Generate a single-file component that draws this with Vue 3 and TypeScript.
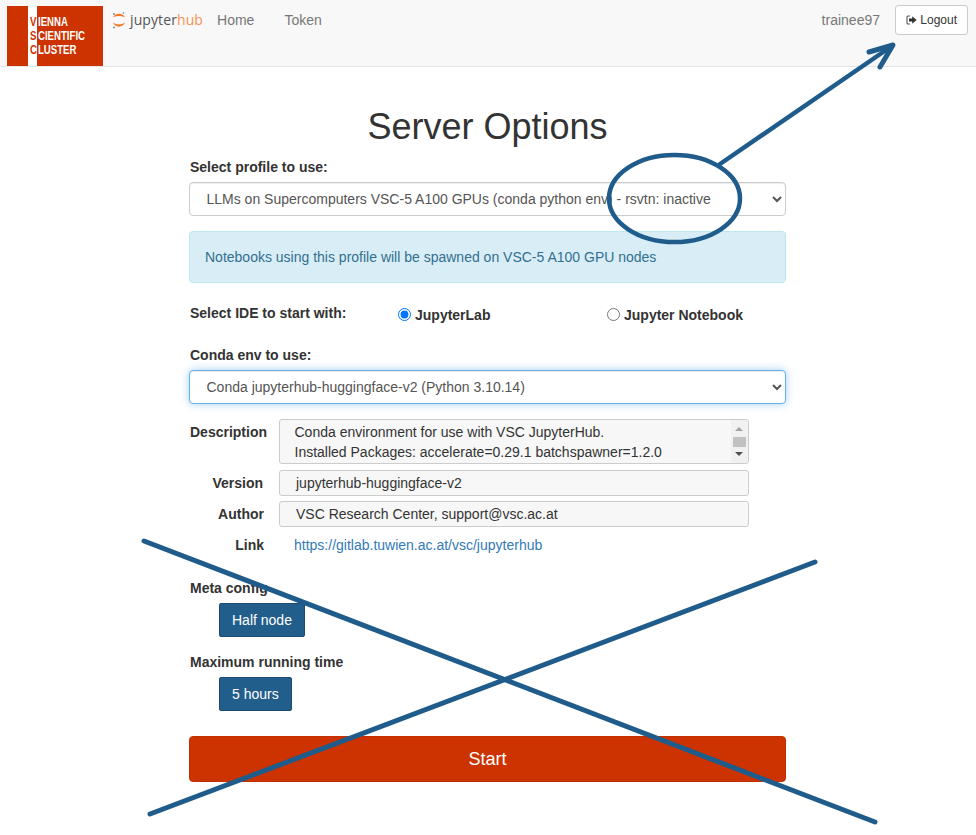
<script setup lang="ts">
import { ref } from 'vue'
const profile = ref('LLMs on Supercomputers VSC-5 A100 GPUs (conda python env) - rsvtn: inactive')
const env = ref('Conda jupyterhub-huggingface-v2 (Python 3.10.14)')
const ide = ref('lab')
</script>

<template>
  <div class="page">
    <nav class="navbar">
      <div class="logo">
        <div class="stripe"></div>
        <div class="logo-text">
          <span><b>V</b>IENNA</span>
          <span><b>S</b>CIENTIFIC</span>
          <span><b>C</b>LUSTER</span>
        </div>
      </div>
      <div class="jh">
        <svg class="jh-mark" width="14" height="18" viewBox="0 0 14 18">
          <path d="M1 6.5 C3 1.5 11 1.5 13 6.5 C10 4.5 4 4.5 1 6.5Z" fill="#f37726"/>
          <path d="M1 11.5 C3 17 11 17 13 11.5 C10 14 4 14 1 11.5Z" fill="#f37726"/>
          <circle cx="2" cy="3" r="0.9" fill="#777"/>
          <circle cx="11.5" cy="2" r="0.8" fill="#777"/>
          <circle cx="2" cy="16.4" r="0.9" fill="#777"/>
        </svg>
        <span class="jh-a">jupyter</span><span class="jh-b">hub</span>
      </div>
      <a class="nav-link first">Home</a>
      <a class="nav-link">Token</a>
      <div class="nav-right">
        <span class="user">trainee97</span>
        <button class="logout">
          <svg width="11" height="10" viewBox="0 0 11 10">
            <path d="M4 1H2Q1 1 1 2V8Q1 9 2 9H4" fill="none" stroke="#555" stroke-width="1.1"/>
            <path d="M3 3.6H6.2V1.2L10.6 5L6.2 8.8V6.4H3Z" fill="#333"/>
          </svg>
          Logout
        </button>
      </div>
    </nav>

    <main class="container">
      <h1>Server Options</h1>
      <label class="lbl first-lbl">Select profile to use:</label>
      <select class="control" v-model="profile">
        <option>LLMs on Supercomputers VSC-5 A100 GPUs (conda python env) - rsvtn: inactive</option>
      </select>
      <div class="alert">Notebooks using this profile will be spawned on VSC-5 A100 GPU nodes</div>

      <div class="ide">
        <span class="ide-label">Select IDE to start with:</span>
        <label class="radio lab"><input type="radio" value="lab" v-model="ide" />JupyterLab</label>
        <label class="radio nb"><input type="radio" value="nb" v-model="ide" />Jupyter Notebook</label>
      </div>

      <label class="lbl env-lbl">Conda env to use:</label>
      <select class="control focus" v-model="env">
        <option>Conda jupyterhub-huggingface-v2 (Python 3.10.14)</option>
      </select>

      <div class="meta">
        <div class="meta-row desc-row">
          <span class="key">Description</span>
          <div class="box desc">
            <div class="desc-text">Conda environment for use with VSC JupyterHub.<br />Installed Packages: accelerate=0.29.1 batchspawner=1.2.0</div>
            <div class="scroll">
              <i class="up"></i>
              <i class="thumb"></i>
              <i class="down"></i>
            </div>
          </div>
        </div>
        <div class="meta-row">
          <span class="key">Version</span>
          <div class="box">jupyterhub-huggingface-v2</div>
        </div>
        <div class="meta-row author-row">
          <span class="key">Author</span>
          <div class="box">VSC Research Center, support@vsc.ac.at</div>
        </div>
        <div class="meta-row link-row">
          <span class="key">Link</span>
          <a class="link">https://gitlab.tuwien.ac.at/vsc/jupyterhub</a>
        </div>
      </div>

      <label class="lbl cfg-lbl">Meta config</label>
      <button class="opt">Half node</button>
      <label class="lbl time-lbl">Maximum running time</label>
      <button class="opt">5 hours</button>
      <button class="start">Start</button>
    </main>

    <svg class="annot" width="976" height="835" viewBox="0 0 976 835">
      <g fill="none" stroke="#1f5c8b" stroke-linecap="round" stroke-linejoin="round">
        <ellipse cx="674.5" cy="198.5" rx="65.5" ry="43.5" stroke-width="4.5"/>
        <path d="M720 164 L889 48" stroke-width="4.5"/>
        <path d="M869 52 L893 45 L880 67" stroke-width="5"/>
        <path d="M144 541 L875 822" stroke-width="5"/>
        <path d="M815 562 L150 814" stroke-width="5"/>
      </g>
    </svg>
  </div>
</template>

<style scoped>
.page {
  position: relative;
  width: 976px;
  height: 835px;
  overflow: hidden;
  background: #fff;
  color: #333;
  font-family: "Liberation Sans", Arial, sans-serif;
  font-size: 14px;
  line-height: 20px;
}
.navbar {
  display: flex;
  height: 67px;
  box-sizing: border-box;
  background: #f8f8f8;
  border-bottom: 1px solid #e7e7e7;
  padding-left: 7px;
}
.logo {
  position: relative;
  width: 96px;
  height: 60px;
  margin-top: 6px;
  background: #cc3300;
  flex: none;
}
.stripe {
  position: absolute;
  left: 21px;
  top: 0;
  width: 9px;
  height: 60px;
  background: #fff;
}
.logo-text {
  position: absolute;
  left: 23px;
  top: 9px;
  display: flex;
  flex-direction: column;
  color: #fff;
  font-family: "Liberation Sans", Arial, sans-serif;
  font-weight: 700;
  font-size: 13px;
  line-height: 14px;
  transform: scaleX(0.74);
  transform-origin: left top;
  white-space: nowrap;
}
.logo-text b {
  display: inline-block;
  width: 10.8px;
  color: #cc3300;
}
.jh {
  display: flex;
  align-items: center;
  height: 18px;
  margin: 11px 0 0 9px;
  font-family: "Open Sans", sans-serif;
  font-size: 14px;
  line-height: 18px;
  letter-spacing: 0.1px;
}
.jh-mark {
  margin-right: 4px;
}
.jh-a {
  color: #555;
}
.jh-b {
  color: #f5934f;
}
.nav-link {
  margin: 10px 0 0 30px;
  color: #777;
  line-height: 20px;
}
.nav-link.first {
  margin-left: 14px;
}
.nav-right {
  margin-left: auto;
  display: flex;
  align-items: flex-start;
  padding-right: 8px;
}
.user {
  margin: 10px 15px 0 0;
  color: #777;
}
.logout {
  margin-top: 5px;
  width: 73px;
  height: 30px;
  padding: 0;
  background: #fff;
  border: 1px solid #ccc;
  border-radius: 3px;
  color: #333;
  font: 12px/18px "Liberation Sans", Arial, sans-serif;
}
.logout svg {
  vertical-align: -1px;
}
.container {
  width: 597px;
  margin-left: 189px;
  display: flex;
  flex-direction: column;
  align-items: flex-start;
}
h1 {
  width: 100%;
  margin: 40px 0 0;
  text-align: center;
  font-size: 36px;
  font-weight: 500;
  line-height: 40px;
}
.lbl {
  display: block;
  margin-left: 1px;
  font-weight: 700;
  line-height: 20px;
}
.first-lbl {
  margin: 10px 0 5px 1px;
}
.control {
  display: block;
  width: 100%;
  height: 34px;
  box-sizing: border-box;
  padding: 6px 12.5px;
  background: #fff;
  border: 1px solid #ccc;
  border-radius: 4px;
  color: #555;
  font: 14px/20px "Liberation Sans", Arial, sans-serif;
  box-shadow: inset 0 1px 1px rgba(0, 0, 0, 0.075);
}
.control.focus {
  border-color: #66afe9;
  box-shadow: inset 0 1px 1px rgba(0, 0, 0, 0.075), 0 0 8px rgba(102, 175, 233, 0.6);
}
.alert {
  width: 100%;
  height: 52px;
  box-sizing: border-box;
  margin-top: 15px;
  padding: 15px 15px;
  background: #d9edf7;
  border: 1px solid #bce8f1;
  border-radius: 4px;
  color: #31708f;
}
.ide {
  position: relative;
  height: 20px;
  width: 100%;
  margin-top: 20px;
}
.ide-label {
  margin-left: 1px;
  font-weight: 700;
}
.radio {
  position: absolute;
  top: 2px;
  display: flex;
  align-items: center;
  font-weight: 700;
  white-space: nowrap;
}
.radio input {
  width: 13px;
  height: 13px;
  margin: -2px 4px 0 0;
  accent-color: #0075ff;
}
.lab {
  left: 209px;
}
.nb {
  left: 418px;
}
.env-lbl {
  margin: 22px 0 5px 1px;
}
.meta {
  width: 100%;
  margin-top: 15px;
}
.meta-row {
  display: flex;
  align-items: center;
  margin-bottom: 5px;
}
.key {
  width: 74px;
  margin-right: 16px;
  font-weight: 700;
  text-align: right;
  flex: none;
}
.author-row .key {
  width: 75px;
  margin-right: 15px;
}
.desc-row {
  align-items: flex-start;
  margin-bottom: 6px;
}
.desc-row .key {
  width: 78px;
  margin-right: 12px;
  margin-top: 3px;
}
.box {
  width: 470px;
  height: 26px;
  box-sizing: border-box;
  padding: 2px 16px;
  background: #f7f7f7;
  border: 1px solid #ccc;
  border-radius: 3px;
  color: #333;
  line-height: 20px;
  white-space: nowrap;
}
.desc {
  position: relative;
  height: 45px;
  overflow: hidden;
  padding: 2px 16px 0 14.5px;
}
.scroll {
  position: absolute;
  top: 0;
  right: 0;
  bottom: 0;
  width: 17px;
  background: #f1f1f1;
}
.scroll i {
  position: absolute;
  display: block;
}
.up {
  left: 4px;
  top: 7px;
  border: 4px solid transparent;
  border-top: 0;
  border-bottom: 4px solid #a3a3a3;
}
.down {
  left: 4px;
  bottom: 7px;
  border: 4px solid transparent;
  border-bottom: 0;
  border-top: 4px solid #505050;
}
.thumb {
  left: 2px;
  top: 17px;
  width: 13px;
  height: 10px;
  background: #c1c1c1;
}
.link-row {
  margin: 0;
  height: 26px;
}
.link-row .key {
  width: 75px;
  margin-right: 30px;
}
.link {
  color: #337ab7;
}
.cfg-lbl {
  margin-top: 20px;
  margin-bottom: 5px;
}
.opt {
  margin-left: 30px;
  height: 34px;
  padding: 0 12px;
  background: #225e8c;
  border: 1px solid #1b4b70;
  border-radius: 2px;
  color: #fff;
  font: 14px/20px "Liberation Sans", Arial, sans-serif;
}
.time-lbl {
  margin-top: 15px;
  margin-bottom: 5px;
}
.start {
  width: 100%;
  height: 46px;
  margin-top: 25px;
  background: #cc3300;
  border: 1px solid #c23000;
  border-radius: 4px;
  color: #fff;
  font: 18px/24px "Liberation Sans", Arial, sans-serif;
}
.annot {
  position: absolute;
  left: 0;
  top: 0;
  pointer-events: none;
}
</style>
